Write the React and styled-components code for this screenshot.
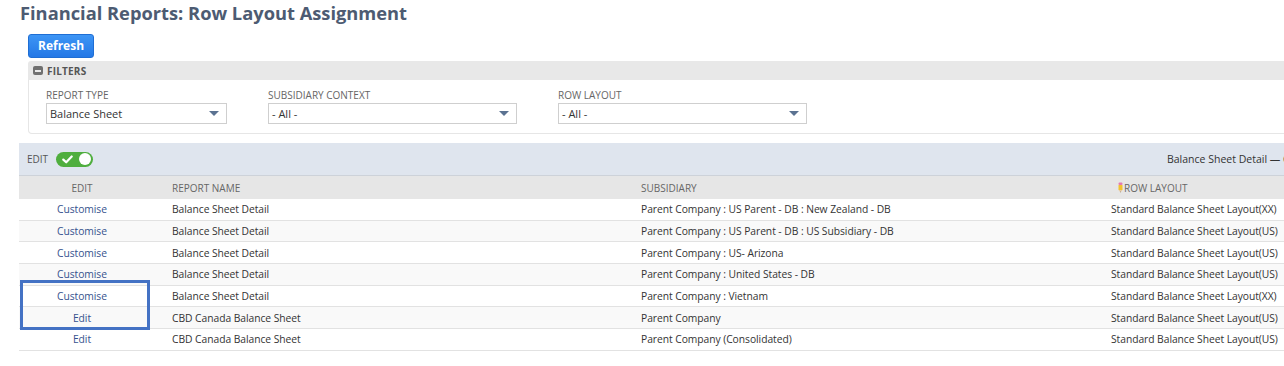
import React from "react";
import styled, { createGlobalStyle } from "styled-components";

const Global = createGlobalStyle`
  html, body { margin: 0; padding: 0; background: #fff; overflow: hidden; }
  body { font-family: "Open Sans", "Liberation Sans", Arial, sans-serif; color: #333; }
  * { box-sizing: border-box; }
`;

const Page = styled.div`
  width: 1400px;
  padding-top: 1px;
`;

const Title = styled.h1`
  margin: 0 0 0 20px;
  font-size: 18.3px;
  line-height: 24px;
  font-weight: 700;
  color: #4d5b72;
`;

const Toolbar = styled.div`
  height: 36px;
  padding: 8px 0 0 28px;
`;

const Button = styled.button`
  height: 24px;
  padding: 0 9px;
  border: 1px solid #1f6ed4;
  border-radius: 3px;
  background: linear-gradient(#3d95f5, #2478e6);
  color: #fff;
  font-family: inherit;
  font-weight: 700;
  font-size: 12px;
  line-height: 20px;
`;

const FilterPanel = styled.section`
  margin-left: 28px;
  width: 1372px;
`;

const FilterHead = styled.div`
  height: 19px;
  background: #e8e8e8;
  display: flex;
  align-items: center;
  gap: 4px;
  padding-left: 5px;
  border-top-left-radius: 3px;
`;

const MinusBox = styled.span`
  width: 10px;
  height: 9px;
  background: #707070;
  border-radius: 2px;
  display: flex;
  align-items: center;
  justify-content: center;
  &::after { content: ""; width: 6px; height: 2px; background: #e8e8e8; }
`;

const FilterTitle = styled.span`
  font-size: 10px;
  font-weight: 700;
  color: #555;
  letter-spacing: 0.2px;
`;

const FilterBody = styled.div`
  height: 54px;
  border: 1px solid #e6e6e6;
  border-top: none;
  border-bottom-left-radius: 4px;
  display: flex;
  gap: 41px;
  padding: 9px 0 0 17px;
`;

const Field = styled.div`
  display: flex;
  flex-direction: column;
  gap: 1px;
`;

const FieldLabel = styled.label`
  font-size: 10px;
  line-height: 13px;
  color: #666;
  text-transform: uppercase;
`;

const Select = styled.div`
  width: ${(p) => p.$w}px;
  height: 21px;
  border: 1px solid #cfcfcf;
  display: flex;
  align-items: center;
  justify-content: space-between;
  padding: 0 7px 0 3px;
  font-size: 11px;
  color: #333;
`;

const Caret = styled.span`
  width: 0;
  height: 0;
  border-left: 5px solid transparent;
  border-right: 5px solid transparent;
  border-top: 5px solid #5b7291;
`;

const ListWrap = styled.div`
  position: relative;
  margin: 9px 0 0 19px;
  width: 1381px;
`;

const EditBar = styled.div`
  height: 33px;
  background: #dfe5ee;
  border-bottom: 1px solid #cdd2d9;
  display: flex;
  align-items: center;
  padding-left: 8px;
`;

const EditLabel = styled.span`
  font-size: 10px;
  color: #555;
  margin-right: 8px;
`;

const Toggle = styled.span`
  width: 37px;
  height: 15px;
  border-radius: 8px;
  background: #4fae3e;
  display: flex;
  align-items: center;
  justify-content: space-between;
  padding: 0 2px 0 6px;
`;

const Knob = styled.span`
  width: 12px;
  height: 12px;
  border-radius: 50%;
  background: #fff;
`;

const BarInfo = styled.span`
  margin-left: auto;
  width: 233px;
  font-size: 10.5px;
  color: #333;
  white-space: nowrap;
`;

const Grid = styled.div`
  display: grid;
  grid-template-columns: 126px 469px 470px 1fr;
`;

const HeadCell = styled.div`
  height: 23px;
  background: #e6e6e6;
  display: flex;
  align-items: center;
  justify-content: ${(p) => (p.$center ? "center" : "flex-start")};
  padding-left: ${(p) => (p.$center ? 0 : p.$pad || 27)}px;
  font-size: 10px;
  color: #666;
  text-transform: uppercase;
  gap: 1px;
`;

const Cell = styled.div`
  height: 21.67px;
  border-bottom: 1px solid #e2e2e2;
  background: ${(p) => (p.$alt ? "#f9f9f9" : "#fff")};
  display: flex;
  align-items: center;
  justify-content: ${(p) => (p.$center ? "center" : "flex-start")};
  padding-left: ${(p) => (p.$center ? 0 : 27)}px;
  font-size: 10.3px;
  letter-spacing: -0.05px;
  color: #333;
  white-space: nowrap;
`;

const Link = styled.a`
  color: #36528e;
  text-decoration: none;
`;

const Highlight = styled.div`
  position: absolute;
  left: 1px;
  top: 137px;
  width: 130px;
  height: 50px;
  border: 3px solid #4472c4;
  pointer-events: none;
`;

const rows = [
  ["Customise", "Balance Sheet Detail", "Parent Company : US Parent - DB : New Zealand - DB", "Standard Balance Sheet Layout(XX)"],
  ["Customise", "Balance Sheet Detail", "Parent Company : US Parent - DB : US Subsidiary - DB", "Standard Balance Sheet Layout(US)"],
  ["Customise", "Balance Sheet Detail", "Parent Company : US- Arizona", "Standard Balance Sheet Layout(US)"],
  ["Customise", "Balance Sheet Detail", "Parent Company : United States - DB", "Standard Balance Sheet Layout(US)"],
  ["Customise", "Balance Sheet Detail", "Parent Company : Vietnam", "Standard Balance Sheet Layout(XX)"],
  ["Edit", "CBD Canada Balance Sheet", "Parent Company", "Standard Balance Sheet Layout(US)"],
  ["Edit", "CBD Canada Balance Sheet", "Parent Company (Consolidated)", "Standard Balance Sheet Layout(US)"],
];

const Pencil = () => (
  <svg width="5" height="11" viewBox="0 0 5 11">
    <rect x="0.5" y="0.5" width="4" height="2.5" rx="1" fill="#e57bb0" />
    <rect x="0.5" y="3" width="4" height="5" fill="#f2c230" />
    <path d="M0.5 8 L4.5 8 L2.5 10.5 Z" fill="#e8c9a0" />
    <path d="M2 9.8 L3 9.8 L2.5 10.6 Z" fill="#555" />
  </svg>
);

const Check = () => (
  <svg width="11" height="9" viewBox="0 0 11 9">
    <path d="M1.3 4.6 L4.2 7.3 L9.7 1.5" fill="none" stroke="#fff" strokeWidth="2.2" strokeLinecap="round" strokeLinejoin="round" />
  </svg>
);

export default function App() {
  return (
    <>
      <Global />
      <Page>
        <Title>Financial Reports: Row Layout Assignment</Title>
        <Toolbar>
          <Button>Refresh</Button>
        </Toolbar>
        <FilterPanel>
          <FilterHead>
            <MinusBox />
            <FilterTitle>FILTERS</FilterTitle>
          </FilterHead>
          <FilterBody>
            <Field>
              <FieldLabel>Report Type</FieldLabel>
              <Select $w={181}>
                <span>Balance Sheet</span>
                <Caret />
              </Select>
            </Field>
            <Field>
              <FieldLabel>Subsidiary Context</FieldLabel>
              <Select $w={249}>
                <span>- All -</span>
                <Caret />
              </Select>
            </Field>
            <Field>
              <FieldLabel>Row Layout</FieldLabel>
              <Select $w={249}>
                <span>- All -</span>
                <Caret />
              </Select>
            </Field>
          </FilterBody>
        </FilterPanel>
        <ListWrap>
          <EditBar>
            <EditLabel>EDIT</EditLabel>
            <Toggle>
              <Check />
              <Knob />
            </Toggle>
            <BarInfo>Balance Sheet Detail — Customise</BarInfo>
          </EditBar>
          <Grid>
            <HeadCell $center>Edit</HeadCell>
            <HeadCell>Report Name</HeadCell>
            <HeadCell>Subsidiary</HeadCell>
            <HeadCell $pad={34}>
              <Pencil />
              Row Layout
            </HeadCell>
            {rows.map((r, i) => (
              <React.Fragment key={i}>
                <Cell $center $alt={i % 2 === 1}>
                  <Link href="#">{r[0]}</Link>
                </Cell>
                <Cell $alt={i % 2 === 1}>{r[1]}</Cell>
                <Cell $alt={i % 2 === 1}>{r[2]}</Cell>
                <Cell $alt={i % 2 === 1}>{r[3]}</Cell>
              </React.Fragment>
            ))}
          </Grid>
          <Highlight />
        </ListWrap>
      </Page>
    </>
  );
}
